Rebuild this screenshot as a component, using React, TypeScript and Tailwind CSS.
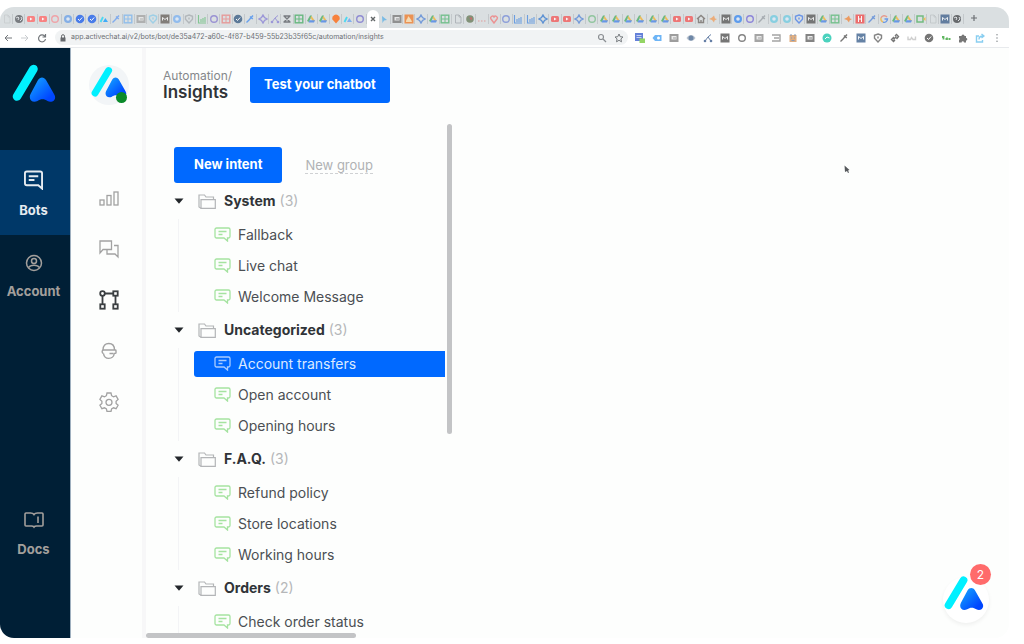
import { useState } from 'react'

interface Group {
  name: string
  count: number
  intents: string[]
}

const groups: Group[] = [
  { name: 'System', count: 3, intents: ['Fallback', 'Live chat', 'Welcome Message'] },
  { name: 'Uncategorized', count: 3, intents: ['Account transfers', 'Open account', 'Opening hours'] },
  { name: 'F.A.Q.', count: 3, intents: ['Refund policy', 'Store locations', 'Working hours'] },
  { name: 'Orders', count: 2, intents: ['Check order status'] },
]

// kind and color of every tab icon, left to right
const tabs = (
  'doc:#c3c7ca globe:#5f6368 video:#ff6b6b video:#ff6b6b ring:#f4949a disc:#6ea3e8 bolt:#2563eb bolt:#2563eb logo:#1a9fff pen:#6b9ff0 ' +
  'grid:#7fb6ee box:#a4a4a4 drop:#8fcbe8 sq:#6b6560 disc:#7fb3f0 note:#a8adb2 bars:#6cbf7f ring:#8a7fd0 cal:#e88a8a check:#3c5f86 ' +
  'pen:#4a90f0 star:#8d86d6 chat:#8d86d6 x:#5f6368 sheet:#4caf6a drive:#e0a030 drive:#4caf6a pin:#ff6a13 logo:#6aa5f0 ring:#7e78d0 ' +
  'active:#3c4043 cursor:#5fb2e6 cam:#7d7d7d fire:#f08030 star:#5a8ad8 drive:#4caf6a sheet:#5cb97a doc:#9aa0a6 apple:#6c7f5f dots:#e0a8a8 ' +
  'heart:#f08080 ring:#7a8fd8 chart:#4f8fe0 chart:#4f8fe0 gem:#3f7fd0 video:#f25c5c video:#f25c5c star:#5a8ad8 ring:#7fc08f drive:#e0a030 ' +
  'drive:#e0a030 drive:#e0a030 drive:#e0a030 drive:#e0a030 drive:#4caf6a video:#f25c5c video:#f25c5c home:#77706c spark:#f0a060 sq:#5c5c5c ' +
  'disc:#3f8cf0 ring:#7a6fd8 pen:#9aa0a6 disc:#74cbe0 disc:#74cbe0 shield:#4f82e8 sq:#5c5c5c drive:#e0a030 sheet:#5cb97a spark:#f08a40 ' +
  'h:#f05050 rocket:#5a8ad8 goog:#e88a7a drive:#4caf6a drive:#4caf6a meet:#58b368 doc:#b8bcc0 flag:#44658f globe:#4a4d51'
).split(' ').map((t) => t.split(':'))

const extensions = (
  'tab:#3f62d0 tag:#4aa3f5 box:#858585 eye:#4a6a92 nodes:#3f6090 sq:#555555 ring:#666666 box:#8f8f8f lines:#8f8f8f ' +
  'robot:#d99a62 face:#666666 teal:#1fc7ae pen:#555555 flag:#3f638f shield:#666666 link:#555555 brk:#c4c4c4 check:#555555 dash:#3aa53a puzzle:#555555 share:#6cc3ee'
).split(' ').map((t) => t.split(':'))

function Glyph({ kind, color }: { kind: string; color: string }) {
  const line = { fill: 'none', stroke: color, strokeWidth: 1.4 }
  switch (kind) {
    case 'doc':
      return <path d="M2.500 1h3.500l2 2v6h-5.500zM6 1v2h2" {...line} strokeWidth={0.8} />
    case 'globe':
      return <><circle cx="5" cy="5" r="4" fill={color} /><path d="M2 4l2-1 1 1-1 2M6 7l2-2-1-2" stroke="#dee1e6" fill="none" /></>
    case 'video':
      return <><rect x="1" y="2" width="8" height="6" rx="1.500" fill={color} /><path d="M4 3.500v3l2.500-1.500z" fill="#fff" /></>
    case 'drive':
      return <><path d="M4 1.500h2L3 8 1 7z" fill="#4caf6a" /><path d="M5.500 2L9 7H6.500L4.500 3.500z" fill="#f0b43c" /><path d="M2.500 8.500L3.500 6.300H9L8 8.500z" fill="#4a86e8" /></>
    case 'disc':
      return <><circle cx="5" cy="5" r="4" fill={color} /><circle cx="5" cy="5" r="1.800" fill="#dee9f8" /></>
    case 'bolt':
    case 'check':
      return <><circle cx="5" cy="5" r="4.300" fill={color} /><path d="M3 5l1.500 1.500L7.200 3.500" stroke="#fff" fill="none" /></>
    case 'teal':
      return <><circle cx="5" cy="5" r="4.500" fill={color} /><path d="M3 6l2-2 2.500 1" stroke="#fff" fill="none" /></>
    case 'ring':
      return <circle cx="5" cy="5" r="3.300" {...line} />
    case 'logo':
      return <><path d="M1.500 8L4 3" stroke="#28d7f5" strokeWidth="1.800" /><path d="M4 8l2.300-4L9 8z" fill={color} /></>
    case 'pen':
    case 'rocket':
      return <path d="M1.500 8.500L4 6l4-4.500M5 2.500l2.800 2.500" {...line} />
    case 'grid':
    case 'sheet':
    case 'cal':
      return <><rect x="1.200" y="1.200" width="7.600" height="7.600" {...line} /><path d="M1 5h8M5 2v7" stroke={color} /></>
    case 'box':
    case 'cam':
    case 'face':
      return <><rect x="0.500" y="1" width="9" height="8" fill={color} /><rect x="2.500" y="3" width="5" height="3.500" fill="#e6e6e6" /><path d="M4 5h3" stroke={color} /></>
    case 'sq':
    case 'flag':
      return <><rect x="0.500" y="0.500" width="9" height="9" fill={color} /><path d="M2.500 6.500v-3l2.500 2 2.500-2v3" stroke="#fff" fill="none" strokeWidth="0.900" /></>
    case 'bars':
    case 'chart':
      return <path d="M1.500 1v8H9M4 8V5M6 8V4M8 8V3" {...line} strokeWidth={1.1} />
    case 'chat':
    case 'nodes':
      return <><path d="M2 8l3-4 3 4M5 4l3-2.500" {...line} strokeWidth={1} /><circle cx="2" cy="8" r="1.300" fill={color} /><circle cx="8" cy="8" r="1.300" fill={color} /></>
    case 'x':
      return <path d="M1.500 2h7M1.500 8h7M2 2l6 6M8 2L2 8" {...line} />
    case 'pin':
      return <path d="M5 9.500L1.500 5.500a3.700 3.700 0 1 1 7 0z" fill={color} />
    case 'active':
      return <path d="M3 3l4 4M7 3L3 7" {...line} />
    case 'cursor':
      return <path d="M3 2l5 4-3 .5L3.500 9z" fill={color} />
    case 'fire':
      return <><rect x="0.500" y="0.500" width="9" height="9" fill={color} /><path d="M2 8c0-3 2-3 2-6 2 2 3 3 4 6z" fill="#fbd9a8" /></>
    case 'apple':
      return <><circle cx="5" cy="5" r="3.800" fill={color} /><path d="M4 3.500h3v3z" fill="#c75050" /></>
    case 'dots':
      return <path d="M1 7h1.500M4 7h1.500M7 7h1.500" {...line} />
    case 'heart':
      return <path d="M5 9L2 5a1.800 1.800 0 0 1 3-2 1.800 1.800 0 0 1 3 2z" {...line} />
    case 'home':
      return <path d="M1 5l4-3.500L9 5M2.500 4.500v4h5v-4M5 8.500V6" {...line} />
    case 'star':
    case 'gem':
      return <path d="M5 1l1.500 2.500L9 5 6.500 6.500 5 9 3.500 6.500 1 5l2.500-1.500z" {...line} />
    case 'spark':
      return <path d="M1 5l3-1.500L6 1.500l1 3 2 .5-2.500 1.500L6 8.500 4 6z" fill={color} />
    case 'h':
      return <><rect x="0.500" y="0.500" width="9" height="9" fill={color} /><path d="M3.500 2v6M6.500 2v6M3.500 5h3" stroke="#fff" /></>
    case 'goog':
      return <><path d="M8 3A3.500 3.500 0 0 0 2 4" {...line} /><path d="M2 4a3.500 3.500 0 0 0 2 4" {...line} stroke="#f0b43c" /><path d="M4 8.200A3.500 3.500 0 0 0 8.500 5H5.500" {...line} stroke="#4a86e8" /></>
    case 'meet':
      return <><rect x="1" y="2" width="6" height="6" fill="none" stroke={color} strokeWidth="1.500" /><path d="M7 5l2.500-2v4z" fill="#f0b43c" /></>
    case 'tab':
      return <><rect x="0" y="0" width="8" height="8" fill={color} /><path d="M1.500 2.500h5M1.500 4.500h5" stroke="#b9c7f2" /><rect x="4.500" y="5.500" width="5.500" height="4.500" fill="#7acb3f" /></>
    case 'tag':
      return <><path d="M0.500 5L3 2h6.500v6H3z" fill={color} /><circle cx="6.500" cy="5" r="1.500" fill="#fff" /></>
    case 'eye':
      return <><path d="M0.500 5C3 1 7 1 9.500 5 7 9 3 9 .5 5z" fill="#a8b4c4" /><circle cx="5" cy="5" r="2.500" fill={color} /></>
    case 'lines':
      return <path d="M1 2h8v6H1M3 5h5" {...line} />
    case 'robot':
      return <><rect x="1.500" y="2" width="7" height="7" fill={color} /><path d="M3 1v2M7 1v2M3 5h1M6 5h1M3.500 7.500h3" stroke="#6a83a8" /></>
    case 'link':
      return <path d="M5 3l1.500-1.500 2 2L6.500 6M5 7L3.500 8.500l-2-2L4 4M3.500 6.500l3-3" {...line} />
    case 'brk':
      return <path d="M1 3.500v3h2.500l1-2 1.500 2h2.500v-3" {...line} />
    case 'dash':
      return <path d="M1 4h1.500v2.500M4.500 6H6V4.500M7.500 6H9.500" {...line} strokeWidth={1.8} />
    case 'puzzle':
      return <path d="M1 3h2.500a1.500 1.500 0 1 1 3 0H8v2a1.300 1.300 0 1 1 0 2.600V9.500H6a1.200 1.200 0 0 0-2.400 0H1V7a1.200 1.200 0 0 0 0-2z" fill={color} />
    case 'share':
      return <path d="M4 3H1.500v6h6V7M4 6.500C4 4 5.500 3 8 3M6.500 1L9 3 6.500 5" {...line} />
    default:
      return <path d="M5 1l3.500 1.300v3L5 9 1.500 5.300v-3zM5 3.500v2" {...line} />
  }
}

function MiniIcon({ kind, color }: { kind: string; color: string }) {
  return (
    <svg className="size-2.5 shrink-0 opacity-80" viewBox="0 0 10 10" aria-hidden="true">
      <Glyph kind={kind} color={color} />
    </svg>
  )
}

function Logo({ id, className }: { id: string; className: string }) {
  return (
    <svg className={className} viewBox="0 0 44 38" aria-hidden="true">
      <defs>
        <linearGradient id={id} x1="0" y1="0" x2="1" y2="1">
          <stop offset="0.25" stopColor="#0f8dff" />
          <stop offset="0.8" stopColor="#0046ff" />
        </linearGradient>
      </defs>
      <path d="M5 32.500L21.500 5" stroke="#00f0ff" strokeWidth="8.500" strokeLinecap="round" />
      <path
        d="M26 16c2-3.500 6-3.500 8 0l8 14c3.500 5.500-2 9.500-6.500 7-3-2.500-7-2.500-10 0-5 2.500-9.500-1.500-7-7z"
        fill={`url(#${id})`}
      />
    </svg>
  )
}

function BrowserBar() {
  return (
    <header>
      <div className="flex h-[21px] items-center bg-[#dadfe1] pr-[26px] pl-px">
        <div className="flex h-full min-w-0 flex-1 items-end">
          {tabs.map(([kind, color], i) => (
            <div
              key={i}
              className={
                kind === 'active'
                  ? 'flex h-[18px] flex-1 items-center justify-center rounded-t-md bg-white'
                  : 'flex h-[18px] flex-1 items-center justify-center'
              }
            >
              <div className={kind === 'active' ? 'flex justify-center' : 'flex w-full justify-center border-r border-[#c3c8cb]'}>
                <MiniIcon kind={kind} color={color} />
              </div>
            </div>
          ))}
        </div>
        <button type="button" aria-label="New tab" className="flex w-[19px] justify-center">
          <svg className="size-2" viewBox="0 0 8 8" aria-hidden="true">
            <path d="M4 1v6M1 4h6" stroke="#6b6f73" strokeWidth="1.200" />
          </svg>
        </button>
      </div>

      <div className="flex h-5 items-center border-b border-[#e8eaed] bg-white pr-[7px] pl-[3px]">
        <div className="flex w-[52px] shrink-0 items-center gap-[7px]">
          <button type="button" aria-label="Back">
            <svg className="size-2.5" viewBox="0 0 10 10" fill="none" stroke="#73777b" aria-hidden="true">
              <path d="M9 5H2M5 2L2 5l3 3" />
            </svg>
          </button>
          <button type="button" aria-label="Forward">
            <svg className="size-2.5" viewBox="0 0 10 10" fill="none" stroke="#c9cccf" aria-hidden="true">
              <path d="M1 5h7M5 2l3 3-3 3" />
            </svg>
          </button>
          <button type="button" aria-label="Reload">
            <svg className="size-2.5" viewBox="0 0 10 10" fill="none" stroke="#73777b" strokeWidth="1.200" aria-hidden="true">
              <path d="M8 3.500A3.500 3.500 0 1 0 8.500 6M8.500 1v3h-3" />
            </svg>
          </button>
        </div>
        <div className="flex h-[15px] min-w-0 flex-1 items-center rounded-full bg-[#f1f3f4] px-1">
          <svg className="mr-1 size-2" viewBox="0 0 8 8" aria-hidden="true">
            <rect x="1.500" y="3.500" width="5" height="4" fill="#66696d" />
            <path d="M2.500 4V2.200a1.500 1.500 0 0 1 3 0V4" fill="none" stroke="#66696d" />
          </svg>
          <input
            aria-label="Address"
            readOnly
            defaultValue="app.activechat.ai/v2/bots/bot/de35a472-a60c-4f87-b459-55b23b35f65c/automation/insights"
            className="min-w-0 flex-1 bg-transparent text-[7px] text-[#6c7074] outline-none"
          />
          <button type="button" aria-label="Zoom" className="mr-[7px]">
            <svg className="size-2.5" viewBox="0 0 10 10" fill="none" stroke="#8a8e92" strokeWidth="1.200" aria-hidden="true">
              <circle cx="4" cy="4" r="2.500" />
              <path d="M6 6l3 3" />
            </svg>
          </button>
          <button type="button" aria-label="Bookmark">
            <svg className="size-2.5" viewBox="0 0 10 10" fill="none" stroke="#777b7f" aria-hidden="true">
              <path d="M5 1l1.200 2.700 2.800.3-2.100 1.900.6 2.900L5 7.300 2.500 8.800l.6-2.900L1 4l2.800-.3z" />
            </svg>
          </button>
        </div>
        <div className="ml-[7px] flex shrink-0 items-center gap-[7px]">
          {extensions.map(([kind, color], i) => (
            <MiniIcon key={i} kind={kind} color={color} />
          ))}
          <svg className="size-2.5" viewBox="0 0 10 10" fill="#909498" aria-hidden="true">
            <circle cx="5" cy="1.800" r="0.800" />
            <circle cx="5" cy="5" r="0.800" />
            <circle cx="5" cy="8.200" r="0.800" />
          </svg>
        </div>
      </div>
    </header>
  )
}

function Sidebar() {
  return (
    <nav className="flex w-[71px] shrink-0 flex-col border-r border-[#9fb0bf] bg-[#001f36] text-[13px] leading-4 font-bold">
      <a href="#home" aria-label="Home" className="flex h-[102px] items-start pt-4 pl-3">
        <Logo id="logo-main" className="h-[38px] w-11" />
      </a>
      <a href="#bots" className="flex h-[85px] flex-col items-center gap-3 bg-[#003868] pt-5 pr-[3px] text-[#e6ebf0]">
        <svg className="h-5 w-[19px]" viewBox="0 0 20 20" fill="none" stroke="currentColor" strokeWidth="2" aria-hidden="true">
          <path d="M19 19l-4-3.500H3a2 2 0 0 1-2-2V3a2 2 0 0 1 2-2h14a2 2 0 0 1 2 2z" />
          <path d="M5 6h10M5 10h6" />
        </svg>
        Bots
      </a>
      <a href="#account" className="flex flex-col items-center gap-[11px] pt-[19px] pr-[3px] text-[#a39f9c]">
        <svg className="size-[18px]" viewBox="0 0 18 18" fill="none" stroke="currentColor" strokeWidth="1.500" aria-hidden="true">
          <circle cx="9" cy="9" r="7.500" />
          <circle cx="9" cy="7" r="2.500" />
          <path d="M3.500 13.500c2-3 9-3 11 0" />
        </svg>
        Account
      </a>
      <a href="#docs" className="mt-auto mb-[81px] flex flex-col items-center gap-3 pr-[3px] text-[#a39f9c]">
        <svg className="h-[18px] w-5" viewBox="0 0 20 18" fill="none" stroke="currentColor" strokeWidth="1.600" aria-hidden="true">
          <path d="M10 3.500C9 2 8 2 6.500 2H2a1 1 0 0 0-1 1v11a1 1 0 0 0 1 1h5.500c1 0 2 .3 2.500 1 .5-.7 1.500-1 2.500-1H18a1 1 0 0 0 1-1V3a1 1 0 0 0-1-1h-4.500C12 2 11 2 10 3.500z" />
          <path d="M14 5.500v6.500" />
        </svg>
        Docs
      </a>
    </nav>
  )
}

function SubNav() {
  return (
    <nav className="flex w-[75px] shrink-0 flex-col items-center border-r-4 border-[#f7f7f8] pl-1">
      <div className="relative mt-[17px] flex size-10 items-center justify-center rounded-full bg-[#f2f5f7] pb-[7px]">
        <Logo id="logo-bot" className="h-8 w-9" />
        <span className="absolute right-0.5 bottom-0.5 size-[11px] rounded-full bg-[#0b8a2a]" />
      </div>
      <div className="mt-[83px] flex flex-col gap-[31px] text-[#a2a2a2]">
        <a href="#stats" aria-label="Statistics">
          <svg className="size-5" viewBox="0 0 20 20" fill="none" stroke="currentColor" strokeWidth="1.300" aria-hidden="true">
            <rect x="1" y="12" width="4" height="5" />
            <rect x="8" y="7.500" width="4" height="9.500" />
            <rect x="15" y="4" width="4" height="13" />
          </svg>
        </a>
        <a href="#conversations" aria-label="Conversations">
          <svg className="size-5" viewBox="0 0 20 20" fill="none" stroke="currentColor" strokeWidth="1.300" aria-hidden="true">
            <path d="M1 14V2h11.500v8.500H4z" />
            <path d="M15 6.500h4V18l-3-3H8v-4" />
          </svg>
        </a>
        <a href="#automation" aria-label="Automation" className="text-[#3b3f42]">
          <svg className="size-5" viewBox="0 0 20 20" fill="none" stroke="currentColor" strokeWidth="1.800" aria-hidden="true">
            <path d="M5.500 3.500h9M3.500 5.500v9M16.500 5.500v9" />
            <circle cx="3.500" cy="3.500" r="2.300" />
            <rect x="14.300" y="1.300" width="4.400" height="4.400" />
            <rect x="1.300" y="14.300" width="4.400" height="4.400" />
            <rect x="14.300" y="14.300" width="4.400" height="4.400" />
          </svg>
        </a>
        <a href="#agents" aria-label="Live agents">
          <svg className="size-5" viewBox="0 0 20 20" fill="none" stroke="currentColor" strokeWidth="1.400" aria-hidden="true">
            <path d="M4 9C4 4.500 6.500 2.500 9.800 2.500S15.500 4.500 15.500 9" />
            <path d="M3.500 9h12.800a.7.7 0 0 1 .7.700v2a.7.700 0 0 1-.7.700H15M4.500 9a1.800 1.800 0 0 0 0 3.500" />
            <path d="M4.500 12.500c.8 6.500 9.700 6.500 10.800 0M10.500 12.500h4" />
          </svg>
        </a>
        <a href="#settings" aria-label="Settings">
          <svg className="size-5" viewBox="0 0 20 20" fill="none" stroke="currentColor" strokeWidth="1.300" aria-hidden="true">
            <path d="M8 1h4l.6 2.700 1.900 1.100 2.600-.9 2 3.500-2 1.800v2.200l2 1.800-2 3.500-2.600-.9-1.900 1.100L12 19.500H8l-.6-2.600-1.900-1.100-2.600.9-2-3.500 2-1.800V9.200l-2-1.800 2-3.500 2.600.9 1.900-1.100z" />
            <circle cx="10" cy="10.300" r="3" />
          </svg>
        </a>
      </div>
    </nav>
  )
}

function IntentTree() {
  const [selected, setSelected] = useState('Account transfers')

  return (
    <ul>
      {groups.map((group) => (
        <li key={group.name}>
          <button type="button" aria-expanded="true" className="flex h-9 items-center text-sm">
            <svg className="h-1.5 w-2.5" viewBox="0 0 10 6" aria-hidden="true">
              <path d="M0.500 0.500h9L5 5.800z" fill="#23272b" />
            </svg>
            <svg className="mr-2 ml-[14px] h-[15px] w-[18px]" viewBox="0 0 18 15" fill="none" stroke="#b3b5b7" strokeWidth="1.200" aria-hidden="true">
              <path d="M3 14.300L1 13V1h5.500l1.500 2h7.500v2.500" />
              <path d="M3 14.300V5.700h14.300v8.600z" />
            </svg>
            <span className="font-bold text-[#303438]">{group.name}</span>
            <span className="ml-1 text-[#b5b7b9]">({group.count})</span>
          </button>
          <ul className="ml-1 border-l border-[#f3f4f6]">
            {group.intents.map((intent) => {
              const active = intent === selected
              return (
                <li key={intent} className="flex h-[31px] items-center pl-[15px]">
                  <button
                    type="button"
                    onClick={() => setSelected(intent)}
                    className={`flex h-[26px] w-full items-center gap-[7px] rounded-l-[3px] pl-5 text-sm ${
                      active ? 'bg-[#0069ff] text-[#dbeaff]' : 'text-[#4b4f53]'
                    }`}
                  >
                    <svg
                      className={`h-[15px] w-[17px] ${active ? 'text-[#a9ccff]' : 'text-[#a5e3a0]'}`}
                      viewBox="0 0 17 15"
                      fill="none"
                      stroke="currentColor"
                      strokeWidth="1.300"
                      aria-hidden="true"
                    >
                      <path d="M2.500 1h12a1.500 1.500 0 0 1 1.500 1.500v7a1.500 1.500 0 0 1-1.500 1.500H13.500v3l-3.500-3H2.500A1.500 1.500 0 0 1 1 9.500v-7A1.500 1.500 0 0 1 2.500 1z" />
                      <path d="M4.500 4.500h8M4.500 7.500h4" />
                    </svg>
                    {intent}
                  </button>
                </li>
              )
            })}
          </ul>
        </li>
      ))}
    </ul>
  )
}

export default function App() {
  return (
    <div className="h-screen bg-white pt-[7px] pr-[15px] pb-1.5 font-['Inter','Liberation_Sans',sans-serif]">
      <div className="relative flex h-full flex-col overflow-hidden rounded-[14px] bg-[#fdfefd]">
        <BrowserBar />
        <div className="flex min-h-0 flex-1">
          <Sidebar />
          <SubNav />
          <main className="flex min-w-0 flex-1 flex-col">
            <div className="flex h-[76px] shrink-0 items-start gap-[18px] pt-[19px] pl-[17px]">
              <div className="pt-0.5">
                <p className="text-xs leading-[14px] text-[#85888b]">Automation/</p>
                <h1 className="text-[17px] leading-[18px] font-semibold text-[#303438]">Insights</h1>
              </div>
              <button type="button" className="h-9 rounded-[3px] bg-[#0069ff] px-[14px] text-[13px] font-bold text-white">
                Test your chatbot
              </button>
            </div>
            <div className="flex min-h-0 flex-1">
              <section className="flex w-[306px] shrink-0 flex-col">
                <div className="flex min-h-0 flex-1">
                  <div className="min-w-0 flex-1 overflow-hidden pt-[23px] pl-7">
                    <div className="flex items-center gap-[23px]">
                      <button type="button" className="h-9 rounded-[3px] bg-[#0069ff] px-5 text-[13px] font-bold text-white">
                        New intent
                      </button>
                      <button type="button" className="border-b border-dashed border-[#cfd1d3] text-[13px] leading-4 text-[#b0b2b4]">
                        New group
                      </button>
                    </div>
                    <IntentTree />
                  </div>
                  <div className="ml-0.5 w-[5px]">
                    <div className="h-[61%] rounded-full bg-[#c3c4c6]" />
                  </div>
                </div>
                <div className="h-[5px] shrink-0">
                  <div className="h-full w-[210px] rounded-full bg-[#c3c4c6]" />
                </div>
              </section>
            </div>
          </main>
        </div>

        {/* mouse pointer */}
        <svg className="absolute top-[158px] left-[844px] h-2 w-1.5" viewBox="0 0 6 8" aria-hidden="true">
          <path d="M0.500 0.500L5.500 5 4 5.500 5 7.500 4 8 3 6 1 7z" fill="#55585b" />
        </svg>

        <button
          type="button"
          aria-label="Open chat, 2 unread messages"
          className="absolute right-5 bottom-[15px] flex size-[46px] items-center justify-center rounded-full bg-white pr-1 pb-[14px] shadow-[0_2px_4px_rgba(0,0,0,0.06)]"
        >
          <Logo id="logo-chat" className="h-9 w-10 shrink-0" />
          <span className="absolute -top-[13px] -right-0.5 flex size-[21px] items-center justify-center rounded-full bg-[#ff6b6b] text-xs text-white">
            2
          </span>
        </button>
      </div>
    </div>
  )
}
